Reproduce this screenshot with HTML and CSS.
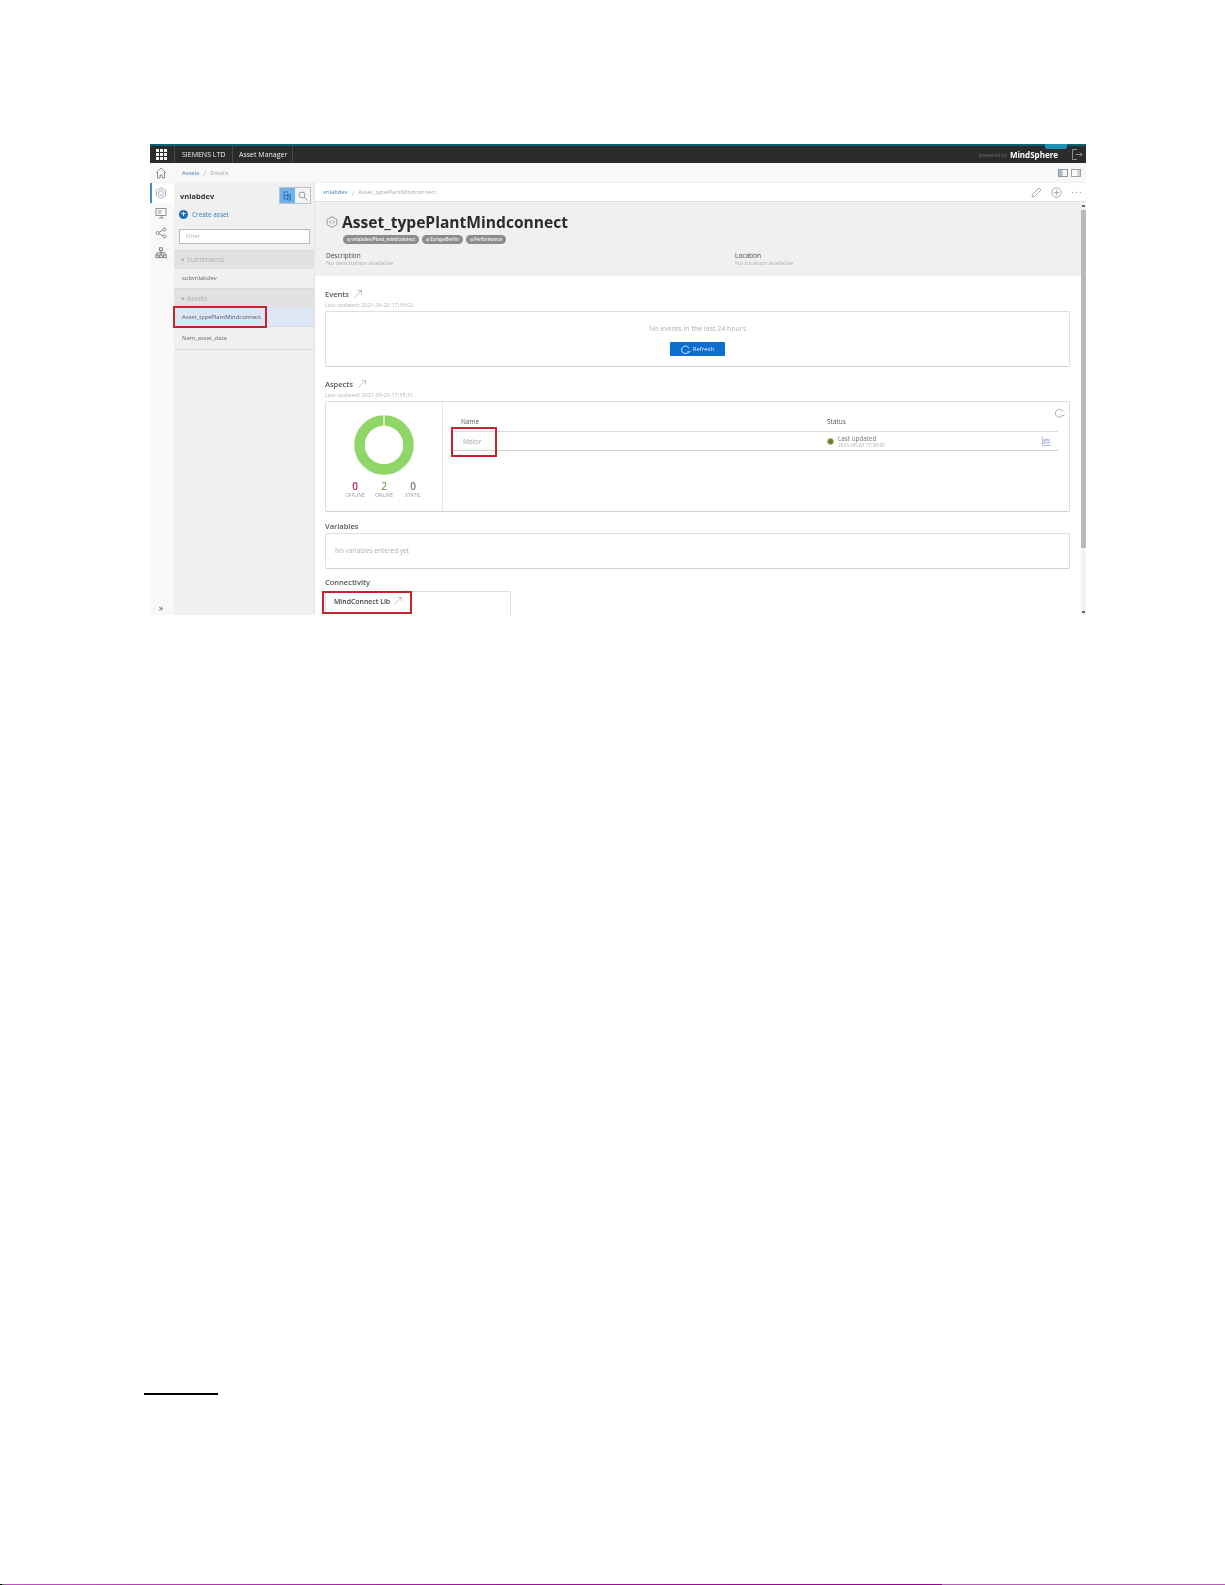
FILE: index.html
```html
<!DOCTYPE html>
<html lang="en">
<head>
<meta charset="utf-8">
<title>Asset Manager</title>
<link rel="stylesheet" href="styles.css">
</head>
<body>
<div class="shot">
  <header class="topbar">
    <div class="waffle">
      <svg width="11" height="11" viewBox="0 0 11 11" fill="#f2f2f2"><rect width="3" height="3"/><rect x="4" width="3" height="3"/><rect x="8" width="3" height="3"/><rect y="4" width="3" height="3"/><rect x="4" y="4" width="3" height="3"/><rect x="8" y="4" width="3" height="3"/><rect y="8" width="3" height="3"/><rect x="4" y="8" width="3" height="3"/><rect x="8" y="8" width="3" height="3"/></svg>
    </div>
    <div class="tb-cell tb-org">SIEMENS LTD</div>
    <div class="tb-cell tb-app">Asset Manager</div>
    <div class="tb-right">
      <span class="powered">powered by</span>
      <span class="brand">MindSphere</span>
      <svg class="logout" width="11" height="11" viewBox="0 0 11 11" fill="none" stroke="#8f8f8f"><path d="M5 .5H.5v10H5M3.500 5.500H10M8 3.500l2 2-2 2"/></svg>
    </div>
    <span class="tb-badge"></span>
  </header>

  <nav class="crumbbar">
    <div class="crumbs"><span class="link">Assets</span><span class="sep">/</span><span class="dim">Details</span></div>
    <div class="layout-icons">
      <svg width="10" height="8" viewBox="0 0 10 8"><rect x=".5" y=".5" width="9" height="7" fill="none" stroke="#8a9aa8"/><rect x="1" y="1" width="3.500" height="6" fill="#a9bccb"/></svg>
      <svg width="10" height="8" viewBox="0 0 10 8"><rect x=".5" y=".5" width="9" height="7" fill="none" stroke="#a0a0a0"/><rect x="6.500" y="1" width="2.500" height="6" fill="#d0d0d0"/></svg>
    </div>
  </nav>

  <div class="workspace">
    <aside class="rail">
      <div class="rail-item">
        <svg width="12" height="12" viewBox="0 0 12 12" fill="none" stroke="#777" stroke-width=".8"><path d="M1 6l5-5 5 5M2.500 5v6H5V8h2v3h2.500V5"/></svg>
      </div>
      <div class="rail-item rail-active">
        <svg width="12" height="12" viewBox="0 0 12 12" fill="none" stroke="#8aa0b4" stroke-width=".8"><path d="M6 .8l4.600 2.600v5.200L6 11.200 1.400 8.600V3.400z"/><circle cx="6" cy="6" r="2.400"/></svg>
      </div>
      <div class="rail-item">
        <svg width="12" height="12" viewBox="0 0 12 12" fill="none" stroke="#777" stroke-width=".8"><rect x="1" y="1.500" width="10" height="7"/><path d="M3 4h4M3 6h3M4 11h5M6.500 8.500V11"/></svg>
      </div>
      <div class="rail-item">
        <svg width="12" height="12" viewBox="0 0 12 12" fill="none" stroke="#777" stroke-width=".8"><circle cx="2.500" cy="6" r="1.500"/><circle cx="9.500" cy="2.500" r="1.500"/><circle cx="9.500" cy="9.500" r="1.500"/><path d="M4 5.200l4.200-2M4 6.800l4.200 2"/></svg>
      </div>
      <div class="rail-item">
        <svg width="12" height="12" viewBox="0 0 12 12" fill="none" stroke="#666" stroke-width=".8"><rect x="4.500" y=".8" width="3" height="2.700"/><rect x=".8" y="8" width="2.500" height="2.700"/><rect x="4.700" y="8" width="2.500" height="2.700"/><rect x="8.700" y="8" width="2.500" height="2.700"/><path d="M6 3.500V8M2 8V5.800h8V8"/></svg>
      </div>
      <div class="rail-expand">»</div>
    </aside>

    <aside class="panel">
      <div class="panel-head">
        <span class="panel-title">vnlabdev</span>
        <div class="toggle">
          <span class="toggle-on">
            <svg width="9" height="10" viewBox="0 0 9 10" fill="none" stroke="#2a6fb0" stroke-width=".9"><path d="M1 1h4M1 1v7h3M1 4.500h3"/><rect x="4.500" y="3.500" width="3" height="2"/><rect x="4.500" y="7" width="3" height="2"/></svg>
          </span>
          <span class="toggle-off">
            <svg width="10" height="10" viewBox="0 0 10 10" fill="none" stroke="#8a9aa8"><circle cx="4" cy="4" r="3"/><path d="M6.200 6.200L9.500 9.500"/></svg>
          </span>
        </div>
      </div>
      <div class="create">
        <span class="create-dot">+</span>
        <span class="link">Create asset</span>
      </div>
      <div class="filter">Filter</div>
      <div class="group">▾ Subtenants</div>
      <div class="item item-sub">subvnlabdev</div>
      <div class="group group-assets">▾ Assets</div>
      <div class="item item-selected">Asset_typePlantMindconnect<span class="mark mark-asset"></span></div>
      <div class="item item-last">Nam_asset_data</div>
    </aside>

    <main class="main">
      <div class="main-crumb">
        <div class="crumbs"><span class="link">vnlabdev</span><span class="sep">/</span><span class="dim">Asset_typePlantMindconnect</span></div>
        <div class="actions">
          <svg width="11" height="11" viewBox="0 0 11 11" fill="none" stroke="#999" stroke-width=".8"><path d="M1 10l.6-2.600L8 1l2 2-6.400 6.400z"/></svg>
          <svg width="11" height="11" viewBox="0 0 11 11" fill="none" stroke="#999" stroke-width=".8"><circle cx="5.500" cy="5.500" r="4.800"/><path d="M5.500 2.800v5.400M2.800 5.500h5.400"/></svg>
          <svg width="11" height="3" viewBox="0 0 11 3" fill="#aaa"><circle cx="1.500" cy="1.500" r=".7"/><circle cx="5.500" cy="1.500" r=".7"/><circle cx="9.500" cy="1.500" r=".7"/></svg>
        </div>
      </div>
      <div class="scroller">
        <div class="content">
          <section class="hero">
            <h1 class="title">
              <svg width="12" height="12" viewBox="0 0 12 12" fill="none" stroke="#888" stroke-width=".8"><path d="M6 .6l4.800 2.700v5.400L6 11.400 1.200 8.700V3.300z"/><path d="M5 4.300L3.600 6 5 7.700M7 4.300L8.400 6 7 7.700"/></svg>
              Asset_typePlantMindconnect
            </h1>
            <div class="tags">
              <span class="tag">◎ vnlabdev/Plant_mindconnect</span>
              <span class="tag">◎ EuropeBerlin</span>
              <span class="tag">◎ Performance</span>
            </div>
            <div class="meta">
              <div class="meta-col">
                <div class="meta-label">Description</div>
                <div class="meta-value">No description available</div>
              </div>
              <div class="meta-col">
                <div class="meta-label">Location</div>
                <div class="meta-value">No location available</div>
              </div>
            </div>
          </section>

          <div class="body">
            <h2 class="head head-events">Events <svg class="ext" width="8" height="8" viewBox="0 0 8 8" fill="none" stroke="#aaa" stroke-width=".8"><path d="M.5 7.500l7-7M3.500.5h4v4"/></svg></h2>
            <div class="updated">Last updated: 2021-06-20 17:36:02</div>
            <div class="box box-events">
              <div class="empty">No events in the last 24 hours</div>
              <div class="btn">
                <svg width="10" height="9" viewBox="0 0 10 9" fill="none" stroke="#fff" stroke-width=".8"><path d="M7.800 6.500A3.800 3.800 0 1 1 8 3.500M6.500 6L8 7.500 9.500 6"/></svg>
                Refresh
              </div>
            </div>

            <h2 class="head head-next">Aspects <svg class="ext" width="8" height="8" viewBox="0 0 8 8" fill="none" stroke="#bbb" stroke-width=".8"><path d="M.5 7.500l7-7M3.500.5h4v4"/></svg></h2>
            <div class="updated">Last updated: 2021-06-20 17:35:31</div>
            <div class="box box-aspects">
              <div class="summary">
                <svg class="donut" width="60" height="60" viewBox="0 0 60 60">
                  <circle cx="30" cy="30" r="24.500" fill="none" stroke="#90d568" stroke-width="10.500"/>
                  <rect x="29.300" y="0" width="1.400" height="11" fill="#eaf7e2"/>
                </svg>
                <div class="stats">
                  <div class="stat"><span class="num num-off">0</span><span class="stat-label">OFFLINE</span></div>
                  <div class="stat"><span class="num num-on">2</span><span class="stat-label">ONLINE</span></div>
                  <div class="stat"><span class="num">0</span><span class="stat-label">STATIC</span></div>
                </div>
              </div>
              <div class="aspect-list">
                <svg class="reload" width="11" height="10" viewBox="0 0 11 10" fill="none" stroke="#999" stroke-width=".8"><path d="M8.800 7.200A4 4 0 1 1 9 3.800M7.600 6.500l1.500 1.400 1.500-1.400"/></svg>
                <div class="cols"><span class="col-name">Name</span><span class="col-status">Status</span></div>
                <div class="row">
                  <span class="row-name">Motor</span>
                  <span class="row-status">
                    <span class="dot"></span>
                    <span class="row-text"><span class="row-main">Last updated</span><span class="row-sub">2021-06-20 17:39:00</span></span>
                  </span>
                  <svg class="chart" width="9" height="9" viewBox="0 0 9 9" fill="none" stroke="#9fb0d8" stroke-width=".8"><path d="M.5 0v8.500H9M.5 3h8M.5 6h8M3 3v3M6 3v3M1.500 5L4 2l3 1"/></svg>
                </div>
                <span class="mark mark-motor"></span>
              </div>
            </div>

            <h2 class="head head-vars">Variables</h2>
            <div class="box box-vars">No variables entered yet</div>

            <h2 class="head head-conn">Connectivity</h2>
            <div class="box box-conn">
              <span class="conn-name">MindConnect Lib</span>
              <svg width="8" height="8" viewBox="0 0 9 9" fill="none" stroke="#aab" stroke-width=".8"><path d="M.5 8.500l8-8M4 .5h4.500V5"/></svg>
              <span class="mark mark-conn"></span>
            </div>
          </div>
        </div>
        <div class="scrollbar">
          <span class="arrow-up"></span>
          <span class="thumb"></span>
          <span class="arrow-down"></span>
        </div>
      </div>
    </main>
  </div>
</div>
<div class="footnote-rule"></div>
<div class="scanline"></div>
</body>
</html>
```

FILE: styles.css
```css
* { box-sizing: border-box; }
html, body { margin: 0; padding: 0; background: #fff; }
body {
  width: 1225px;
  height: 1585px;
  overflow: hidden;
  padding-top: 144px;
  font-family: "Open Sans", "Noto Sans", sans-serif;
  color: #333;
  display: flex;
  flex-direction: column;
}

.shot {
  width: 936px;
  height: 471px;
  margin-left: 150px;
  flex: none;
  display: flex;
  flex-direction: column;
  overflow: hidden;
  background: #fff;
  filter: blur(0.4px);
}

/* Top bar */
.topbar {
  height: 19px;
  flex: none;
  display: flex;
  align-items: stretch;
  position: relative;
  background: #2b2b2b;
  border-top: 2px solid #0e5f70;
  color: #f0f0f0;
  font-size: 7px;
}
.waffle { width: 24px; display: flex; align-items: center; justify-content: center; padding-right: 2px; }
.tb-cell {
  display: flex;
  align-items: center;
  border-left: 1px solid #484848;
}
.tb-org { width: 58px; padding-left: 7px; }
.tb-app { width: 61px; padding-left: 6px; border-right: 1px solid #484848; }
.tb-right { margin-left: auto; display: flex; align-items: center; padding-right: 3px; }
.powered { color: #6f6f6f; font-size: 5px; margin-right: 3px; }
.brand { color: #fff; font-weight: 700; font-size: 8px; margin-right: 14px; }
.tb-badge {
  position: absolute;
  top: -2px;
  left: 895px;
  width: 22px;
  height: 5px;
  background: #1f8fb4;
  border-radius: 0 0 2px 2px;
}

/* Breadcrumb bars */
.crumbbar {
  height: 20px;
  flex: none;
  display: flex;
  align-items: center;
  justify-content: space-between;
  padding: 0 5px 0 32px;
  background: #f8f8f8;
  border-bottom: 1px solid #f1f1f1;
}
.crumbs { display: flex; align-items: center; font-size: 5.800px; }
.link { color: #3f7bb0; }
.dim { color: #a8a8a8; }
.sep { color: #c0c0c0; margin: 0 4px; font-size: 8px; }
.layout-icons { display: flex; gap: 3px; }

/* Workspace */
.workspace { flex: 1; display: flex; min-height: 0; }
.rail {
  width: 24px;
  flex: none;
  display: flex;
  flex-direction: column;
  background: #f8f8f8;
  position: relative;
}
.rail-item {
  height: 20px;
  display: flex;
  align-items: center;
  justify-content: center;
  padding-right: 2px;
}
.rail-item:first-child { margin-top: -21px; margin-bottom: 1px; padding-top: 2px; }
.rail-active { background: #fff; border-left: 2px solid #3f8ac4; padding-right: 4px; }
.rail-expand {
  margin-top: auto;
  height: 14px;
  padding-right: 2px;
  font-size: 9px;
  line-height: 14px;
  text-align: center;
  color: #555;
}

/* Asset panel */
.panel {
  width: 141px;
  flex: none;
  display: flex;
  flex-direction: column;
  background: #f0f0f0;
  border-right: 1px solid #e4e4e4;
}
.panel-head {
  height: 23px;
  flex: none;
  display: flex;
  align-items: center;
  justify-content: space-between;
  padding: 2px 3px 0 6px;
}
.panel-title { font-weight: 700; font-size: 7.500px; color: #333; }
.toggle { display: flex; border: 1px solid #b5c4d0; height: 17px; }
.toggle-on, .toggle-off { width: 15px; display: flex; align-items: center; justify-content: center; }
.toggle-on { background: #6fb1e8; }
.toggle-off { background: #f4f4f4; }
.create { height: 16px; flex: none; display: flex; align-items: center; gap: 4px; padding: 0 0 0 5px; font-size: 6.400px; }
.create-dot {
  width: 9px;
  height: 9px;
  border-radius: 50%;
  background: #1f6fb5;
  color: #fff;
  font-size: 8px;
  line-height: 8px;
  text-align: center;
  font-weight: 700;
}
.filter {
  flex: none;
  height: 15px;
  margin: 7px 4px 6px 5px;
  background: #fff;
  border: 1px solid #b9b9b9;
  padding-left: 6px;
  font-size: 6px;
  line-height: 13px;
  color: #b5b5b5;
}
.group {
  flex: none;
  height: 19px;
  padding-left: 7px;
  font-size: 7px;
  line-height: 18px;
  color: #b0b0b0;
  background: #e2e2e2;
  border-top: 1px solid #d8d8d8;
}
.group-assets { height: 18px; }
.item {
  flex: none;
  height: 20px;
  padding-left: 8px;
  font-size: 5.900px;
  line-height: 20px;
  color: #666;
  border-bottom: 1px solid #dcdcdc;
  position: relative;
}
.item-sub { line-height: 18px; }
.item-selected { background: #dce6f4; color: #4a5a6a; }
.item-last { height: 23px; padding-top: 1px; }

/* Red annotation rectangles */
.mark { position: absolute; border: 2px solid #c4242b; pointer-events: none; }
.mark-asset { left: -1px; top: -1px; width: 94px; height: 22px; }
.mark-motor { left: 8px; top: 25px; width: 46px; height: 30px; }
.mark-conn { left: -4px; top: -1px; width: 90px; height: 23px; }

/* Main */
.main { flex: 1; min-width: 0; display: flex; flex-direction: column; background: #fff; }
.main-crumb {
  height: 19px;
  flex: none;
  display: flex;
  align-items: center;
  justify-content: space-between;
  padding: 0 4px 0 8px;
  border-bottom: 1px solid #dfdfdf;
}
.actions { display: flex; align-items: center; gap: 9px; }
.scroller { flex: 1; display: flex; min-height: 0; }
.content { flex: 1; min-width: 0; overflow: hidden; }
.scrollbar {
  width: 5px;
  flex: none;
  display: flex;
  flex-direction: column;
  align-items: center;
  background: #f2f2f2;
}
.arrow-up, .arrow-down { width: 3px; height: 2px; background: #666; flex: none; }
.arrow-up { margin-top: 3px; }
.thumb { width: 5px; height: 338px; margin-top: 3px; background: #b9b9b9; flex: none; }
.arrow-down { margin-top: auto; margin-bottom: 2px; }

.hero {
  height: 74px;
  padding: 9px 0 0 11px;
  background: #f0f0f0;
}
.title {
  margin: 0;
  height: 22px;
  display: flex;
  align-items: center;
  gap: 4px;
  font-size: 15.600px;
  font-weight: 700;
  color: #2b2b2b;
  white-space: nowrap;
}
.tags { display: flex; gap: 3px; margin: 2px 0 0 17px; }
.tag {
  height: 9px;
  padding: 0 4px;
  border-radius: 5px;
  background: #8c8c8c;
  color: #e8e8e8;
  font-size: 4.400px;
  line-height: 9px;
  font-weight: 700;
  white-space: nowrap;
}
.meta { display: flex; margin-top: 8px; }
.meta-col { flex: none; width: 300px; }
.meta-col:first-child { width: 409px; }
.meta-label { font-size: 6.500px; line-height: 8px; color: #444; }
.meta-value { font-size: 6px; line-height: 7px; color: #b0b0b0; }

.body { padding: 0 11px 0 10px; }
.head {
  margin: 0;
  display: flex;
  align-items: center;
  gap: 5px;
  height: 10px;
  font-size: 7.500px;
  font-weight: 600;
  color: #555;
}
.head-events { margin-top: 13px; }
.head-next { margin-top: 12px; }
.head-vars { margin-top: 9px; }
.head-conn { margin-top: 8px; }
.updated { margin-top: 2px; height: 8px; font-size: 5.500px; line-height: 8px; color: #b5b5b5; }
.box {
  background: #fff;
  border: 1px solid #dedede;
  border-bottom-color: #d0d0d0;
  border-radius: 2px;
}
.box-events {
  margin-top: 2px;
  height: 56px;
  display: flex;
  flex-direction: column;
  align-items: center;
  padding-top: 12px;
}
.empty { font-size: 7px; line-height: 9px; color: #b0b0b0; white-space: nowrap; }
.btn {
  margin-top: 9px;
  width: 55px;
  height: 14px;
  display: flex;
  align-items: center;
  justify-content: center;
  gap: 2px;
  background: #0b6fd0;
  border-radius: 1px;
  color: #e8f2ff;
  font-size: 6px;
}
.box-aspects { margin-top: 2px; height: 111px; display: flex; }
.summary {
  width: 117px;
  flex: none;
  border-right: 1px solid #e6e6e6;
  display: flex;
  flex-direction: column;
  align-items: center;
  padding-top: 13px;
}
.stats { display: flex; gap: 9px; margin-top: 6px; justify-content: center; width: 100%; }
.stat { width: 20px; display: flex; flex-direction: column; align-items: center; }
.num { font-size: 10px; line-height: 11px; font-weight: 600; color: #777; }
.num-off { color: #c2185b; }
.num-on { color: #6fae4c; }
.stat-label { font-size: 5px; line-height: 7px; color: #a0a0a0; white-space: nowrap; }
.aspect-list { flex: 1; position: relative; padding: 15px 11px 0 9px; }
.reload { position: absolute; right: 4px; top: 6px; }
.cols { display: flex; height: 14px; font-size: 6.500px; line-height: 10px; color: #555; }
.col-name { width: 375px; padding-left: 9px; }
.row {
  height: 20px;
  display: flex;
  align-items: center;
  border-top: 1px solid #dcdcdc;
  border-bottom: 1px solid #d2d2d2;
  font-size: 6.500px;
  color: #a0a0a0;
}
.row-name { width: 375px; padding-left: 11px; flex: none; }
.row-status { display: flex; align-items: center; gap: 4px; flex: 1; }
.dot {
  width: 7px;
  height: 7px;
  border-radius: 50%;
  background: #6a7a35;
  border: 1.500px solid #a8c880;
}
.row-text { display: flex; flex-direction: column; }
.row-main { font-size: 6.300px; line-height: 7px; color: #777; }
.row-sub { font-size: 5px; line-height: 6px; color: #aaa; }
.chart { margin-right: 7px; }
.box-vars {
  margin-top: 2px;
  height: 36px;
  padding: 0 0 0 9px;
  font-size: 6.500px;
  line-height: 34px;
  color: #b0b0b0;
}
.box-conn {
  margin-top: 4px;
  width: 186px;
  height: 40px;
  position: relative;
  display: flex;
  align-items: flex-start;
  gap: 4px;
  padding: 5px 0 0 8px;
}
.conn-name { font-size: 6.900px; line-height: 10px; font-weight: 600; color: #444; }

/* Page furniture below the screenshot */
.footnote-rule {
  flex: none;
  width: 74px;
  height: 2px;
  margin: 778px 0 0 144px;
  background: #000;
}
.scanline {
  flex: none;
  height: 1px;
  margin-top: 189px;
  background: linear-gradient(to right, #000 0, #000 2px, #3a8a3a 2px, #3a8a3a 3px, #c050c0 6px, #a0109a 40%, #98008f 76.900%, #b75fb8 76.900%, #b75fb8 100%);
}
```
